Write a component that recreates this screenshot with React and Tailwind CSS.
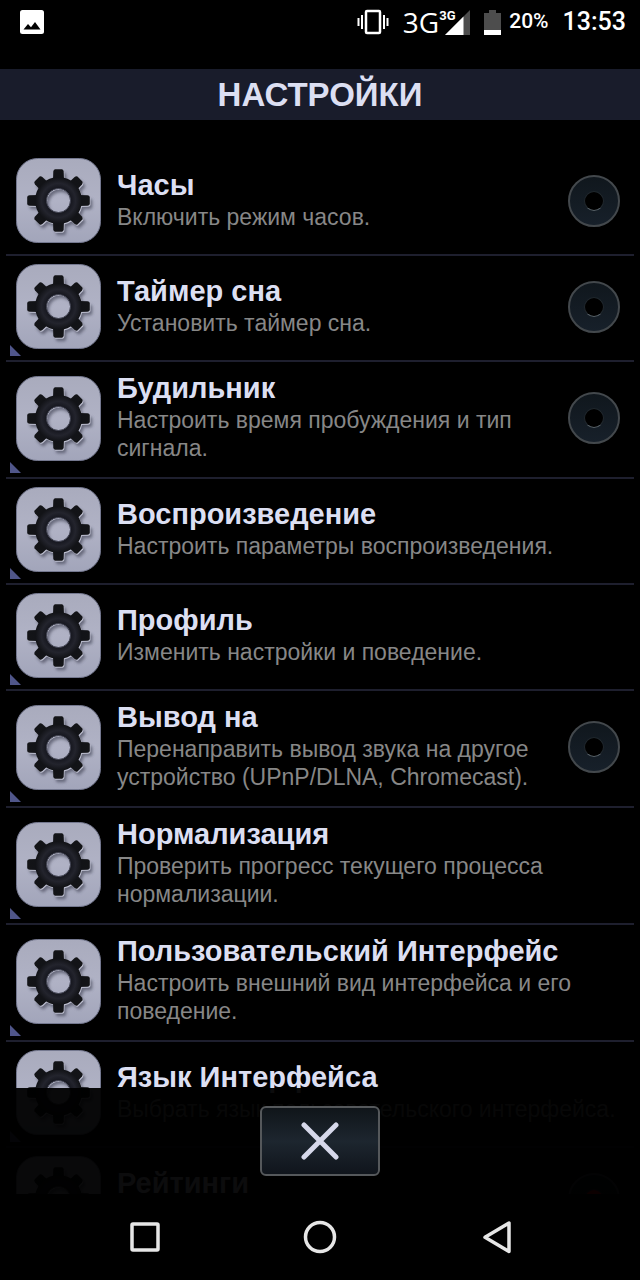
import { useState } from 'react'

const ITEMS = [
  { id: 'clock', title: 'Часы', text: 'Включить режим часов.', toggle: true },
  { id: 'sleep', title: 'Таймер сна', text: 'Установить таймер сна.', toggle: true, more: true },
  { id: 'alarm', title: 'Будильник', text: 'Настроить время пробуждения и тип сигнала.', toggle: true, more: true },
  { id: 'playback', title: 'Воспроизведение', text: 'Настроить параметры воспроизведения.', more: true },
  { id: 'profile', title: 'Профиль', text: 'Изменить настройки и поведение.', more: true },
  { id: 'output', title: 'Вывод на', text: 'Перенаправить вывод звука на другое устройство (UPnP/DLNA, Chromecast).', toggle: true, more: true },
  { id: 'normalize', title: 'Нормализация', text: 'Проверить прогресс текущего процесса нормализации.', more: true },
  { id: 'ui', title: 'Пользовательский Интерфейс', text: 'Настроить внешний вид интерфейса и его поведение.', more: true },
  { id: 'language', title: 'Язык Интерфейса', text: 'Выбрать язык пользовательского интерфейса.', more: true },
  { id: 'ratings', title: 'Рейтинги', toggle: true, on: true },
]

// the diagonal teeth are a little shorter than the straight ones
const STRAIGHT = [0, 90, 180, 270]
const DIAGONAL = [45, 135, 225, 315]

// ─── Icons ──────────────────────────────────────────────────────────────────
function GearShape({ fill }) {
  return (
    <g fill={fill}>
      <path
        fillRule="evenodd"
        d="M0 -23.500a23.500 23.500 0 1 1 0 47a23.500 23.500 0 1 1 0 -47zM0 -12a12 12 0 1 0 0 24a12 12 0 1 0 0 -24z"
      />
      {STRAIGHT.map(a => (
        <path key={a} transform={`rotate(${a})`} d="M-5.500 -20L-5.200 -29Q-5 -31 -3.500 -31.300H3.500Q5 -31 5.200 -29L5.500 -20z" />
      ))}
      {DIAGONAL.map(a => (
        <path key={a} transform={`rotate(${a})`} d="M-5.500 -20L-5.200 -28Q-5 -30 -3.500 -30.300H3.500Q5 -30 5.200 -28L5.500 -20z" />
      ))}
    </g>
  )
}

function GearIcon() {
  return (
    <svg viewBox="0 0 85 85" className="size-[85px] shrink-0" aria-hidden="true">
      <defs>
        <linearGradient id="tile" x1="0" y1="0" x2="0" y2="1">
          <stop offset="0" stopColor="#a9abbd" />
          <stop offset="0.5" stopColor="#b0b2c5" />
          <stop offset="1" stopColor="#a2a5ba" />
        </linearGradient>
        <radialGradient id="gear" gradientUnits="userSpaceOnUse" cx="0" cy="0" r="31">
          <stop offset="0.38" stopColor="#15161e" />
          <stop offset="0.55" stopColor="#23242d" />
          <stop offset="0.74" stopColor="#121317" />
          <stop offset="1" stopColor="#131417" />
        </radialGradient>
        <filter id="soft" x="-20%" y="-20%" width="140%" height="140%">
          <feGaussianBlur stdDeviation="1.5" />
        </filter>
      </defs>
      <rect x="0.500" y="0.500" width="84" height="84" rx="21" fill="url(#tile)" stroke="#74788f" />
      <g transform="translate(45 46)" filter="url(#soft)" opacity="0.7">
        <GearShape fill="#4b4d5e" />
      </g>
      <g transform="translate(43.200 43.500)">
        <GearShape fill="#bfc1d2" />
      </g>
      <g transform="translate(42.500 42.500)">
        <GearShape fill="url(#gear)" />
        <circle r="12" fill="none" stroke="#3b3d4b" strokeWidth="1" />
      </g>
    </svg>
  )
}

function VibrateIcon() {
  return (
    <svg viewBox="0 0 32 26" className="h-[26px] w-8" fill="none" stroke="#fff" aria-hidden="true">
      <rect x="9" y="2" width="14" height="22" rx="1" strokeWidth="2.500" />
      <path d="M5 6v14M27 6v14" strokeWidth="2" />
      <path d="M1.500 9v8M30.500 9v8" strokeWidth="2" />
    </svg>
  )
}

function SignalIcon() {
  return (
    <svg viewBox="0 0 25 25" className="size-[25px]" aria-hidden="true">
      <path d="M25 0V25H0z" fill="#4d4d4d" />
      <path d="M18.500 6.500V25H0z" fill="#fff" />
      <path d="M0 0H11V12H0z" fill="#000" />
    </svg>
  )
}

function BatteryIcon() {
  return (
    <svg viewBox="0 0 17 25" className="h-[25px] w-[17px]" aria-hidden="true">
      <path d="M5 0h7v3h5v22H0V3h5z" fill="#4d4d4d" />
      <path d="M0 20h17v5H0z" fill="#fff" />
    </svg>
  )
}

function PictureIcon() {
  return (
    <svg viewBox="0 0 24 24" className="size-6" aria-hidden="true">
      <rect width="24" height="24" rx="2.500" fill="#fff" />
      <path d="M3.500 19.500L8 14l3 3.300L15 12l5.500 7.500z" fill="#000" />
    </svg>
  )
}

// ─── Bars ───────────────────────────────────────────────────────────────────
function StatusBar() {
  return (
    <div className="flex h-11 shrink-0 items-center justify-between pr-3.5 pl-5 font-['Roboto',sans-serif] text-white">
      <PictureIcon />
      <div className="flex items-center">
        <VibrateIcon />
        <span className="ml-3.5 font-['Open_Sans',sans-serif] text-[28px] leading-8">3G</span>
        <div className="relative ml-1.5">
          <SignalIcon />
          <span className="absolute -top-0.5 -left-1.5 text-[13px] leading-4 font-bold">3G</span>
        </div>
        <div className="ml-3.5"><BatteryIcon /></div>
        <span className="ml-2 text-[21px] font-medium">20%</span>
        <span className="ml-3.5 text-[25px] font-medium">13:53</span>
      </div>
    </div>
  )
}

function NavBar() {
  const btn = 'flex size-16 cursor-pointer items-center justify-center'
  return (
    <nav className="flex h-[86px] shrink-0 items-center justify-between px-[113px]">
      <button type="button" aria-label="Обзор" className={btn}>
        <svg viewBox="0 0 34 34" className="size-[34px]" fill="none" stroke="#e6e6e6" strokeWidth="3.500">
          <rect x="4" y="4" width="26" height="26" rx="1" />
        </svg>
      </button>
      <button type="button" aria-label="Домой" className={btn}>
        <svg viewBox="0 0 34 34" className="size-[34px]" fill="none" stroke="#e6e6e6" strokeWidth="3.500">
          <circle cx="17" cy="17" r="14.500" />
        </svg>
      </button>
      <button type="button" aria-label="Назад" className={btn}>
        <svg viewBox="0 0 34 34" className="size-[34px]" fill="none" stroke="#e6e6e6" strokeWidth="3.500" strokeLinejoin="round">
          <path d="M31 3V31.500L7 17.300z" />
        </svg>
      </button>
    </nav>
  )
}

// ─── Settings list ──────────────────────────────────────────────────────────
function Toggle({ label, defaultOn = false }) {
  const [on, setOn] = useState(defaultOn)
  return (
    <input
      type="checkbox"
      aria-label={label}
      checked={on}
      onChange={e => setOn(e.target.checked)}
      className="grid size-[52px] shrink-0 cursor-pointer appearance-none place-items-center rounded-full border-2 border-[#43484c] bg-linear-to-b from-[#10171d] to-[#17202a] before:size-5 before:rounded-full before:border before:border-[#20282e] before:border-b-[#59636a] before:bg-black checked:before:bg-red-600"
    />
  )
}

function Row({ item }) {
  return (
    <li className="relative mx-1.5 flex min-h-[106px] items-center border-b-2 border-[#1e1f2e] pt-2 pr-3.5 pb-[11px] pl-2.5">
      <button type="button" className="flex min-w-0 flex-1 cursor-pointer items-center gap-4 text-left">
        <GearIcon />
        <span className="min-w-0 flex-1 pb-1">
          <span className="block text-[29px] leading-9 font-bold text-[#dcdff2]">{item.title}</span>
          <span className="block min-h-7 text-[23px] leading-7 text-[#878787]">{item.text}</span>
        </span>
      </button>
      {item.toggle && <Toggle label={item.title} defaultOn={item.on} />}
      {item.more && (
        <svg viewBox="0 0 11 11" className="absolute bottom-1 left-1 size-[11px]" aria-hidden="true">
          <path d="M0 0L11 11H0z" fill="#50568a" />
        </svg>
      )}
    </li>
  )
}

export default function App() {
  return (
    <div className="flex h-screen flex-col overflow-hidden bg-black font-['Liberation_Sans',sans-serif]">
      <StatusBar />
      <h1 className="mt-[25px] shrink-0 bg-[#191c2b] text-center text-[33px] leading-[51px] font-bold text-[#dcdff2]">НАСТРОЙКИ</h1>
      <main className="relative min-h-0 flex-1">
        <ul className="h-full overflow-y-auto pt-[30px] [scrollbar-width:none]">
          {ITEMS.map(item => <Row key={item.id} item={item} />)}
        </ul>
        <div className="absolute inset-x-0 bottom-0 flex h-[106px] justify-center bg-black/95 pt-[18px]">
          <button
            type="button"
            aria-label="Закрыть"
            className="flex h-[70px] w-[120px] cursor-pointer items-center justify-center rounded-md border-2 border-[#55585b] bg-linear-to-b from-[#10151a] via-[#1d262f] to-[#10151c]"
          >
            <svg viewBox="0 0 38 38" className="size-[38px]" stroke="#d6d8ea" strokeWidth="5" strokeLinecap="round" aria-hidden="true">
              <path d="M3 3L35 35M35 3L3 35" />
            </svg>
          </button>
        </div>
      </main>
      <NavBar />
    </div>
  )
}
